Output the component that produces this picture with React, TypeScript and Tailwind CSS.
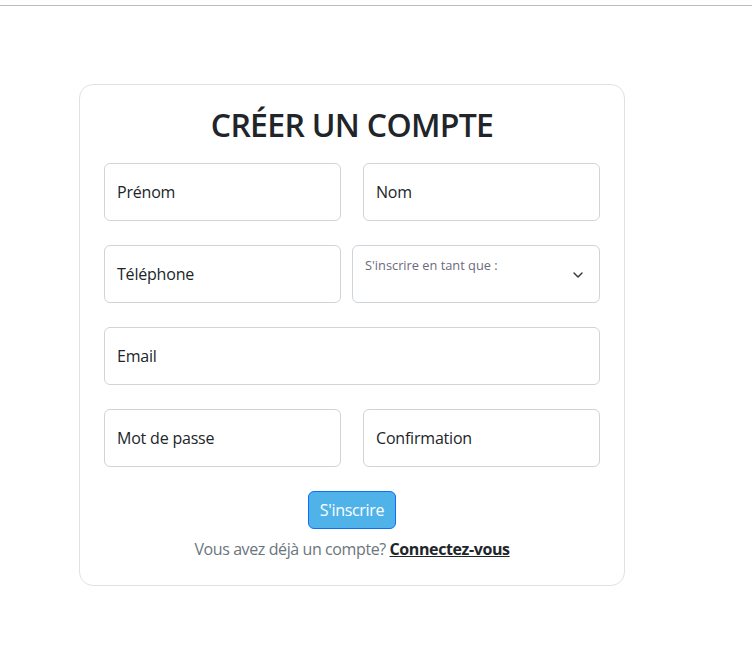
import { ChevronDown } from 'lucide-react';

const Field = ({ label, className = '' }: { label: string; className?: string }) => (
  <div className={`h-[58px] rounded-md border border-[#ced4da] bg-white flex items-center px-[12px] ${className}`}>
    <span className="text-[16px] tracking-[-0.2px] text-[#212529]">{label}</span>
  </div>
);

export default function App() {
  return (
    <div className="min-h-[650px] bg-white font-['Open_Sans','Noto_Sans',sans-serif]">
      <div className="h-[5px]" />
      <div className="h-px bg-[#b6bcc2]" />

      <div className="ml-[79px] mt-[78px] w-[546px] rounded-[14px] border border-[#dee2e6] px-[24px] pt-[20px] pb-[24px]">
        <h1 className="text-center text-[32px] font-semibold leading-[40px] text-[#212529] tracking-[-0.7px]">
          CRÉER UN COMPTE
        </h1>

        <div className="mt-[18px] flex flex-col gap-[24px]">
          <div className="flex gap-[22px]">
            <Field label="Prénom" className="w-[237px]" />
            <Field label="Nom" className="flex-1" />
          </div>

          <div className="flex gap-[11px]">
            <Field label="Téléphone" className="w-[237px]" />
            <div className="relative h-[58px] flex-1 rounded-md border border-[#ced4da] bg-white">
              <span className="absolute left-[12px] top-[10px] text-[12.8px] text-[#6c6a7d]">
                S'inscrire en tant que :
              </span>
              <ChevronDown className="absolute right-[13px] top-[21px] h-[16px] w-[16px] text-[#343a40]" strokeWidth={2.2} />
            </div>
          </div>

          <Field label="Email" />

          <div className="flex gap-[22px]">
            <Field label="Mot de passe" className="w-[237px]" />
            <Field label="Confirmation" className="flex-1" />
          </div>
        </div>

        <div className="mt-[24px] flex justify-center">
          <button className="h-[38px] w-[88px] rounded-md border border-[#0d6efd] bg-[#4fb3e9] text-[16px] tracking-[-0.3px] text-white">
            S'inscrire
          </button>
        </div>

        <p className="mt-[8px] text-center text-[16px] leading-[24px] tracking-[-0.4px] text-[#6c757d]">
          Vous avez déjà un compte?{' '}
          <a className="font-bold text-[#212529] underline">Connectez-vous</a>
        </p>
      </div>
    </div>
  );
}
